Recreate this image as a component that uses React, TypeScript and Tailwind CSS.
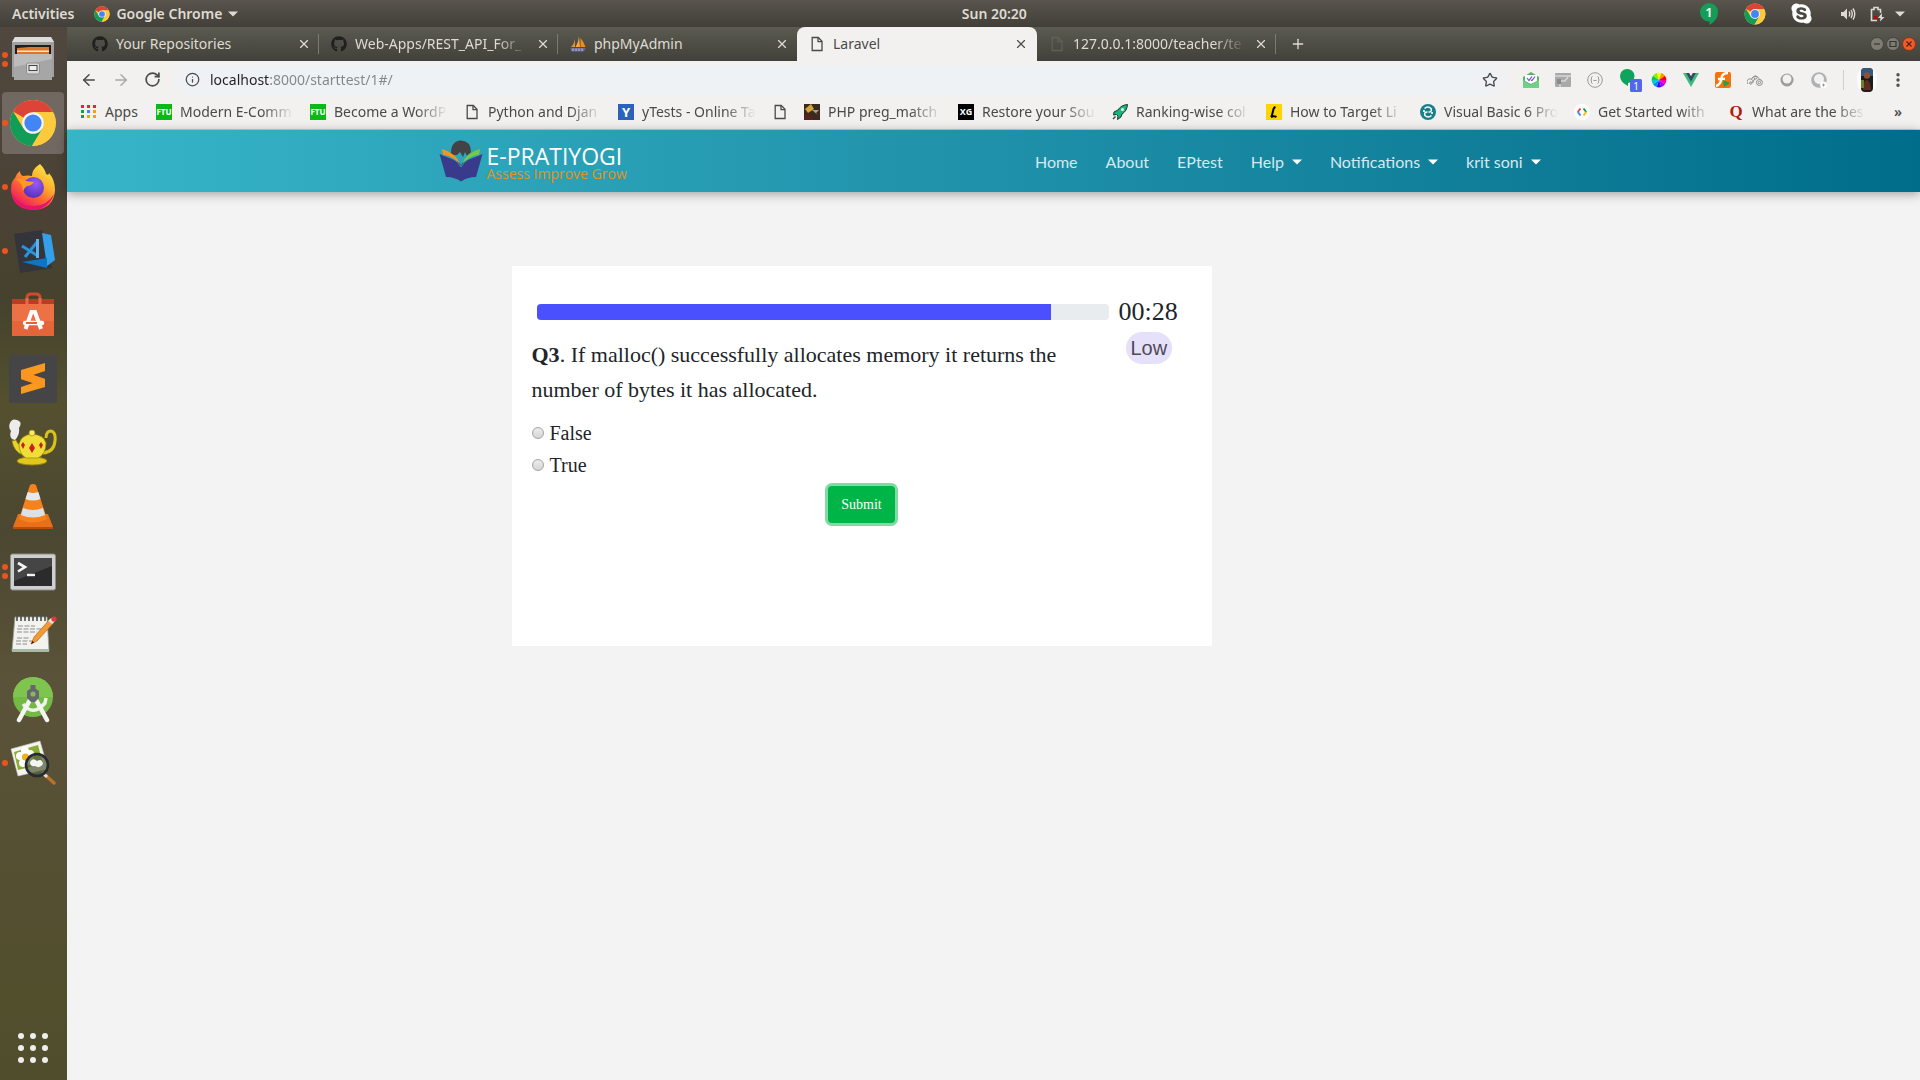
import type { ReactNode } from "react";
import { FaGithub, FaSkype } from "react-icons/fa";
import { ArrowLeft, ArrowRight, EllipsisVertical, Info, Plus, RotateCw, Star, X } from "lucide-react";

/* ---------- Shared icons ---------- */

function ChromeIcon({ className }: { className: string }) {
  return (
    <svg viewBox="0 0 48 48" className={className} aria-hidden="true">
      <circle cx="24" cy="24" r="23" fill="#fdca3d" />
      <path d="M24 24 L4 12.5 A23 23 0 0 1 44 13 L24 13 Z" fill="#dc4437" />
      <path d="M24 24 L33.5 29.5 L23 47 A23 23 0 0 1 4.1 12.5 L14.5 29.5 Z" fill="#119d58" />
      <path d="M33.5 29.5 L23 47 A23 23 0 0 0 44 13.5 L24 13.5 Z" fill="#fdca3d" />
      <circle cx="24" cy="24" r="10.8" fill="#f3f3f3" />
      <circle cx="24" cy="24" r="8.6" fill="#4285f4" />
    </svg>
  );
}

function PageIcon({ color = "#4a4a4a" }: { color?: string }) {
  return (
    <svg viewBox="0 0 16 16" className="size-4 shrink-0" fill="none" stroke={color} strokeWidth="1.3" aria-hidden="true">
      <path d="M3.2 1.5 H9.3 L13 5.3 V14.5 H3.2 Z" />
      <path d="M9 1.5 V5.6 H13" />
    </svg>
  );
}

function PmaIcon() {
  return (
    <svg viewBox="0 0 16 16" className="size-4 shrink-0" aria-hidden="true">
      <path d="M5 2 Q5 7 1 11 H5 Z" fill="#e8912d" />
      <path d="M9 0.5 Q8.5 6 5.6 11 H10 Z" fill="#f9a63a" />
      <path d="M10.5 2 Q14 6 15.5 11 H10.5 Z" fill="#f08c1b" />
      <path d="M0.5 12 H15.5 L14 15.5 H1.5 Z" fill="#6c6a9b" />
      <path d="M3 12.5 V15 M6 12.5 V15 M9 12.5 V15 M12 12.5 V15" stroke="#d5d4e8" strokeWidth="0.8" />
    </svg>
  );
}

/* ---------- Dock ---------- */

const dockSvg = "size-12";

function FilesIcon() {
  return (
    <svg viewBox="0 0 48 48" className={dockSvg}>
      <path d="M6 2 H42 L45 7 V42 H3 V7 Z" fill="#a0a0a0" />
      <path d="M6 2 H42 L45 7 H3 Z" fill="#dcdcdc" />
      <rect x="6" y="10" width="36" height="12" fill="#241c18" />
      <path d="M8 13 L20 12 H40 V20 H8 Z" fill="#e2742a" />
      <path d="M8 15.500 H40 V17 H8 Z" fill="#fde6c8" />
      <rect x="5" y="19" width="38" height="26" rx="1" fill="#bcbcbc" />
      <path d="M5 32 L43 24 V45 H5 Z" fill="#a6a6a6" />
      <rect x="17.500" y="28" width="13" height="11" rx="2" fill="#d8d8d8" stroke="#8f8f8f" />
      <rect x="20" y="30.500" width="8" height="5" fill="#eeeeee" stroke="#444" />
    </svg>
  );
}

function FirefoxIcon() {
  return (
    <svg viewBox="0 0 48 48" className={dockSvg}>
      <defs>
        <linearGradient id="ffBody" x1="1" y1="0" x2="0.3" y2="1">
          <stop offset="0" stopColor="#fff44f" />
          <stop offset="0.4" stopColor="#ffb52e" />
          <stop offset="0.65" stopColor="#ff6a2f" />
          <stop offset="1" stopColor="#ee1167" />
        </linearGradient>
        <radialGradient id="ffGlobe" cx="0.6" cy="0.3" r="0.8">
          <stop offset="0" stopColor="#9a5bf5" />
          <stop offset="1" stopColor="#4d2bb5" />
        </radialGradient>
      </defs>
      <path
        d="M31 1 Q36 6 37 11 Q40 13 40 10 Q46 17 46 27 Q45 46 24 47 Q3 46 2 27 Q2 18 6 15 Q7 11 11 8 Q11 12 14 13 Q19 12 23 13 Q23 6 31 1 Z"
        fill="url(#ffBody)"
      />
      <circle cx="24.500" cy="24.500" r="10.500" fill="url(#ffGlobe)" />
      <path d="M7 16 Q13 15 17 18 Q22 19 25 19 Q22 23 18 23 Q16 24 14 28 Q14 21 7 16 Z" fill="#ff9a28" />
      <path d="M3 30 Q8 46 24 47 Q40 46 45 31 Q38 43 25 43 Q10 43 3 30 Z" fill="#e5156f" />
    </svg>
  );
}

function VsCodeIcon() {
  return (
    <svg viewBox="0 0 48 48" className={dockSvg}>
      <path d="M5 7 L33 3 L43 41 L11 46 Z" fill="#34353a" />
      <path d="M33 6 L42 8 L46 33 L38 39 Z" fill="#35a0ea" />
      <path d="M13 35 L38 31 L38 41 Z" fill="#0b76c4" />
      <path d="M13 19 L29 29 M29 14 L16 30" stroke="#2b93dc" strokeWidth="3" />
      <path d="M28.500 12 V31" stroke="#5ab3ef" strokeWidth="3" />
    </svg>
  );
}

function SoftwareIcon() {
  return (
    <svg viewBox="0 0 48 48" className={dockSvg}>
      <path d="M18 13 V7 Q18 3 22 3 H27 Q31 3 31 7 V13" fill="none" stroke="#d4492d" strokeWidth="3" />
      <path d="M3 8 H45 V14 H3 Z" fill="#b93d22" />
      <path d="M3 13 H45 V45 H3 Z" fill="#ec7145" />
      <path d="M3 30 H45 V45 H3 Z" fill="#e5653b" />
      <path d="M18 13 V7 M31 13 V7" stroke="#e86a48" strokeWidth="3" />
      <path d="M16.500 38 L22.500 21 H26 L32 38" fill="none" stroke="#fff" strokeWidth="4" />
      <path d="M16 32 H33" stroke="#fff" strokeWidth="4.500" strokeLinecap="round" />
      <path d="M17 32 H28" stroke="#e5653b" strokeWidth="2" />
    </svg>
  );
}

function SublimeIcon() {
  return (
    <svg viewBox="0 0 48 48" className={dockSvg}>
      <rect width="48" height="48" rx="3" fill="#454548" />
      <path d="M12 15 L36 8 V16 L24 20 L36 24 V32 L12 39 V32 L24 28 L12 24 Z" fill="#f99a1f" />
      <path d="M12 15 V24 L24 28 L36 32 V24 L24 20 Z" fill="#fb9420" />
    </svg>
  );
}

function TeapotIcon() {
  return (
    <svg viewBox="0 0 48 48" className={dockSvg}>
      <ellipse cx="23" cy="42" rx="15" ry="4" fill="#e2c81d" stroke="#9c8608" />
      <path d="M37 19 Q37 12 42 12 Q47 13 46 22 Q45 33 34 34" fill="none" stroke="#d9c21a" strokeWidth="3" />
      <path d="M3 22 L7 21 Q9 27 15 27 L14 36 Q5 33 3 22 Z" fill="#e8d32b" stroke="#9c8608" strokeWidth="0.7" />
      <path d="M10 25 Q12 16 23 15 Q35 16 37 24 Q37 35 29 39 H17 Q10 35 10 25 Z" fill="#f0de38" stroke="#9c8608" strokeWidth="0.7" />
      <circle cx="23" cy="14" r="3" fill="#f6e965" stroke="#9c8608" strokeWidth="0.7" />
      <path d="M14 23 L16 26 L14 30 L12 26 Z M23 24 L26 29 L23 34 L20 29 Z M32 23 L34 26 L32 30 L30 26 Z" fill="#cc1e1e" />
      <path d="M3 20 Q0 17 2 12 Q-1 8 1 4 Q3 -1 8 1 Q14 3 10 9 Q11 16 6 21 Z" fill="#ececec" />
    </svg>
  );
}

function VlcIcon() {
  return (
    <svg viewBox="0 0 48 48" className={dockSvg}>
      <path d="M9 31 H39 L44 44 V46 H4 V44 Z" fill="#e9701a" />
      <path d="M4 44 H44 V46 H4 Z" fill="#b94e0a" />
      <path d="M21 2 Q24 0 27 2 L38 36 Q24 43 10 36 Z" fill="#f4831f" />
      <path d="M18.700 9 Q24 11 29.300 9 L31.500 16 Q24 19 16.500 16 Z" fill="#e6e9ec" />
      <path d="M14 25 Q24 29 34 25 L36 32 Q24 37 12 32 Z" fill="#dde1e5" />
    </svg>
  );
}

function TerminalIcon() {
  return (
    <svg viewBox="0 0 48 48" className={dockSvg}>
      <rect x="1.500" y="7" width="45" height="36" rx="2" fill="#cfcfcf" stroke="#8e8e8e" />
      <rect x="5" y="11" width="38" height="28" fill="#2b2b2b" />
      <path d="M5 11 H43 V19 L5 34 Z" fill="#454545" />
      <path d="M9 16 L16 20 L9 24.500" fill="none" stroke="#f4f4f4" strokeWidth="2.600" />
      <path d="M18 28 H26" stroke="#f4f4f4" strokeWidth="2.400" />
    </svg>
  );
}

function NotepadIcon() {
  return (
    <svg viewBox="0 0 48 48" className={dockSvg}>
      <path d="M6 6 H38 L40 40 H3 Z" fill="#f2f2ee" stroke="#9aa39a" strokeWidth="0.8" />
      <path d="M3 38 H40 V41 H3 Z" fill="#a8bba8" />
      <path d="M8 4 V10 M12 4 V10 M16 4 V10 M20 4 V10 M24 4 V10 M28 4 V10 M32 4 V10 M36 4 V10" stroke="#4b4b4b" strokeWidth="1.600" />
      <path d="M9 15 H26 M8 18 H33 M8 21 H28 M8 27 H20 M7 30 H24 M7 33 H18" stroke="#8f8f8f" strokeWidth="1" strokeDasharray="5 1.500" />
      <path d="M22 33 L25 26 L41 8 L45 11.500 L28 30 Z" fill="#f29a35" stroke="#b96a14" strokeWidth="0.7" />
      <path d="M39 10 L42 7 L46 10 L43 13 Z" fill="#dfe3e6" />
      <circle cx="45" cy="8" r="2.600" fill="#e03a3a" />
      <path d="M22 33 L23.500 30 L25 31.500 Z" fill="#111" />
    </svg>
  );
}

function StudioIcon() {
  return (
    <svg viewBox="0 0 48 48" className={dockSvg}>
      <circle cx="24" cy="22" r="20" fill="#74b944" />
      <path d="M4 22 A20 20 0 0 1 44 22 Z" fill="#7fc44f" />
      <path d="M14 29 Q24 42 36 28 L37 23" fill="none" stroke="#eef3ea" strokeWidth="3.500" />
      <path d="M22 23 L10 45 M26 23 L38 45" stroke="#f3f5f2" strokeWidth="4.500" strokeLinecap="round" />
      <path d="M21.500 10 H26.500 V15 H21.500 Z" fill="#63686c" />
      <path d="M18 16 L24 12 L30 16 V23 L26 27 H22 L18 23 Z" fill="#63686c" />
      <circle cx="24" cy="19" r="2.600" fill="#8bb55f" />
    </svg>
  );
}

function ViewerIcon() {
  return (
    <svg viewBox="0 0 48 48" className={dockSvg}>
      <path d="M2 10 L31 2 L39 30 L9 37 Z" fill="#f4f4f0" stroke="#c8c8c0" strokeWidth="0.6" />
      <path d="M5 13 L29 6 L34 25 L9 31 Z" fill="#8cac35" />
      <g fill="#fff">
        <circle cx="16" cy="12" r="4" />
        <circle cx="21" cy="15" r="4" />
        <circle cx="21" cy="22" r="4" />
        <circle cx="14" cy="24" r="4" />
        <circle cx="11" cy="17" r="4" />
      </g>
      <circle cx="16.500" cy="18" r="3.600" fill="#f3b01c" />
      <path d="M34 34 L45 44" stroke="#b9722c" strokeWidth="3.500" strokeLinecap="round" />
      <path d="M33 33 L38 38" stroke="#ddd" strokeWidth="3" />
      <circle cx="28" cy="26" r="11" fill="#55603f" fillOpacity="0.75" stroke="#262b30" strokeWidth="2.600" />
      <path d="M21 23 Q24 18 28 22 Q33 19 34 25 Q31 30 26 27 Q21 28 21 23 Z" fill="#f5f5f0" />
    </svg>
  );
}

const dockApps: { name: string; icon: ReactNode; windows: number; active?: boolean }[] = [
  { name: "Files", icon: <FilesIcon />, windows: 2 },
  { name: "Google Chrome", icon: <ChromeIcon className={dockSvg} />, windows: 1, active: true },
  { name: "Firefox", icon: <FirefoxIcon />, windows: 1 },
  { name: "Visual Studio Code", icon: <VsCodeIcon />, windows: 1 },
  { name: "Ubuntu Software", icon: <SoftwareIcon />, windows: 0 },
  { name: "Sublime Text", icon: <SublimeIcon />, windows: 0 },
  { name: "Teapot", icon: <TeapotIcon />, windows: 0 },
  { name: "VLC", icon: <VlcIcon />, windows: 0 },
  { name: "Terminal", icon: <TerminalIcon />, windows: 2 },
  { name: "Text Editor", icon: <NotepadIcon />, windows: 0 },
  { name: "Android Studio", icon: <StudioIcon />, windows: 0 },
  { name: "Image Viewer", icon: <ViewerIcon />, windows: 1 },
];

function Dock() {
  return (
    <nav
      aria-label="Dock"
      className="flex w-[67px] shrink-0 flex-col bg-[linear-gradient(180deg,#50473f_0%,#4b4235_18%,#45422d_26%,#54502f_36%,#4b4731_48%,#5b5339_62%,#565035_75%,#514f2c_92%,#4f4d2c_100%)]"
    >
      {dockApps.map((app) => (
        <button key={app.name} aria-label={app.name} className="flex h-16 items-center">
          <span className={app.active ? "ml-0.5 flex h-[62px] w-[62px] items-center rounded bg-[#716961]" : "ml-0.5 flex h-[62px] w-[62px] items-center rounded"}>
            <span className="flex w-[7px] flex-col gap-[3px]">
              {Array.from({ length: app.windows }, (_, i) => (
                <i key={i} className="size-[6px] rounded-full bg-[#e95420]" />
              ))}
            </span>
            {app.icon}
          </span>
        </button>
      ))}
      <button aria-label="Show applications" className="mt-auto mb-[17px] ml-[18px] grid grid-cols-3 gap-[6px] self-start">
        {Array.from({ length: 9 }, (_, i) => (
          <i key={i} className="size-[6px] rounded-full bg-[#eeeeec]" />
        ))}
      </button>
    </nav>
  );
}

/* ---------- Desktop top bar ---------- */

function Caret({ className }: { className: string }) {
  return (
    <svg viewBox="0 0 10 6" className={className} aria-hidden="true">
      <path d="M0 0.500 H10 L5 5.500 Z" fill="currentColor" />
    </svg>
  );
}

function TopBar() {
  return (
    <header className="grid h-[27px] shrink-0 grid-cols-[14fr_auto_13fr] items-center bg-linear-to-b from-[#59554d] to-[#423f39] text-sm font-semibold text-[#dfdbd2]">
      <div className="flex items-center pl-3">
        <button>Activities</button>
        <button className="ml-5 flex items-center">
          <ChromeIcon className="mr-[6px] size-4" />
          Google Chrome
          <Caret className="ml-[6px] h-[6px] w-[10px]" />
        </button>
      </div>
      <time>Sun 20:20</time>
      <div className="flex items-center justify-end pr-[15px]">
        <svg viewBox="0 0 22 22" className="mr-6 size-[22px]" aria-label="1 notification">
          <path d="M11 0 A9 9 0 0 1 20 9.500 Q20 17 11.500 22 V18.500 A9 9 0 0 1 11 0 Z" fill="#149d58" />
          <text x="11" y="14" textAnchor="middle" fontSize="13" fill="#fff">1</text>
        </svg>
        <ChromeIcon className="mr-6 size-[22px]" />
        <FaSkype className="mr-[27px] size-[23px] text-white" />
        <svg viewBox="0 0 16 16" className="mr-[13px] size-4" fill="none" stroke="currentColor" strokeWidth="1.400">
          <path d="M1 6 H3.500 L7 2.500 V13.500 L3.500 10 H1 Z" fill="currentColor" stroke="none" />
          <path d="M9 5.500 Q10.500 8 9 10.500 M11 4 Q13.500 8 11 12 M13 2.500 Q16.500 8 13 13.500" />
        </svg>
        <svg viewBox="0 0 16 16" className="mr-[10px] size-4" fill="none" stroke="currentColor" strokeWidth="1.600">
          <path d="M8 14.500 H2.500 V3.500 H5 V1.500 H9 V3.500 H11.500 V7" />
          <rect x="5" y="10" width="3" height="3" fill="#c00" stroke="none" />
          <path d="M13 7 L9 12 H11.500 L11 15.500 L15.500 11 H12.800 Z" fill="currentColor" stroke="none" />
        </svg>
        <Caret className="h-[6px] w-[10px]" />
      </div>
    </header>
  );
}

/* ---------- Browser chrome ---------- */

const fade = "overflow-hidden whitespace-nowrap [mask-image:linear-gradient(90deg,#000_calc(100%-32px),transparent)]";
const plain = "overflow-hidden whitespace-nowrap";

const tabs = [
  { title: "Your Repositories", icon: <FaGithub className="size-4 shrink-0 text-[#1f2020]" /> },
  { title: "Web-Apps/REST_API_For_", icon: <FaGithub className="size-4 shrink-0 text-[#1f2020]" />, faded: true },
  { title: "phpMyAdmin", icon: <PmaIcon /> },
  { title: "Laravel", icon: <PageIcon />, active: true },
  { title: "127.0.0.1:8000/teacher/te", icon: <PageIcon color="#60605a" />, faded: true },
];

function TabStrip() {
  return (
    <div className="flex h-[34px] bg-linear-to-b from-[#5c5b51] to-[#41403a] pl-[13px] text-[#dfdbd2]">
      {tabs.map((tab, i) => (
        <div
          key={tab.title}
          className={
            tab.active
              ? "flex w-[240px] items-center rounded-t-lg bg-[#f2f1f0] pr-[9px] pl-3 text-[#4a4a4a]"
              : "flex w-[239px] items-center pl-3"
          }
        >
          {tab.icon}
          <span className={tab.faded ? `ml-2 flex-1 text-sm ${fade}` : `ml-2 flex-1 text-sm ${plain}`}>{tab.title}</span>
          <button aria-label={`Close ${tab.title}`} className="ml-2">
            <X className="size-[14px]" />
          </button>
          {!tab.active && <i className={i === 2 ? "ml-[7px] h-5 w-px" : "ml-[7px] h-5 w-px bg-[#7b7a72]"} />}
        </div>
      ))}
      <button aria-label="New tab" className="ml-[14px]">
        <Plus className="size-4" />
      </button>
      <div className="ml-auto flex items-center gap-[2px] pr-1">
        {["M4 7 H10", "M4 4.500 H10 V9.500 H4 Z"].map((d) => (
          <svg key={d} viewBox="0 0 14 14" className="size-[14px]">
            <circle cx="7" cy="7" r="6.500" fill="#7e7c73" stroke="#44433d" />
            <path d={d} fill="none" stroke="#35342f" strokeWidth="1.200" />
          </svg>
        ))}
        <svg viewBox="0 0 14 14" className="size-[14px]">
          <circle cx="7" cy="7" r="6.500" fill="#ef5b2b" stroke="#8e3313" />
          <path d="M4.500 4.500 L9.500 9.500 M9.500 4.500 L4.500 9.500" stroke="#55230f" strokeWidth="1.300" />
        </svg>
      </div>
    </div>
  );
}

const wheel = ["#ff0", "#f90", "#f00", "#f0a", "#a0f", "#40f", "#08f", "#0cc", "#0c4", "#8e0"];

function Extensions() {
  return (
    <div className="flex items-center gap-4">
      <svg viewBox="0 0 16 16" className="size-4">
        <path d="M0 5 L8 0 L16 5 V16 H0 Z" fill="#58b368" />
        <path d="M2 3 H14 V9 L8 12 L2 9 Z" fill="#fff" />
        <path d="M4 6 L6 8.500 L9 4.500 M8 8 L9 8.500 L12 4.500" fill="none" stroke="#6a4bd0" strokeWidth="1.200" />
        <path d="M0 8 L8 13 L16 8 V16 H0 Z" fill="#6fd184" />
      </svg>
      <svg viewBox="0 0 16 16" className="size-4">
        <rect y="1" width="16" height="14" rx="1" fill="#a9a9a9" />
        <path d="M0 4 H16 M5 15 V9 H10 L13 5" stroke="#d6d6d6" strokeWidth="1.500" fill="none" />
        <rect x="2" y="7" width="4" height="5" fill="#8a8a8a" />
      </svg>
      <svg viewBox="0 0 16 16" className="size-4" fill="none" stroke="#999">
        <circle cx="8" cy="8" r="7.300" />
        <path d="M5.500 4.500 Q4 4.500 4.500 7 L3.800 8 L4.500 9 Q4 11.500 5.500 11.500 M10.500 4.500 Q12 4.500 11.500 7 L12.200 8 L11.500 9 Q12 11.500 10.500 11.500 M6.500 8.500 H9.500" />
      </svg>
      <svg viewBox="0 0 24 24" className="-mr-2 size-6">
        <path d="M8 1 A7 7 0 1 1 9 15 V18 Q1 14 1 8 A7 7 0 0 1 8 1 Z" fill="#0fa45c" />
        <rect x="11" y="11" width="12" height="13" rx="1.500" fill="#5267f0" />
        <text x="17" y="21.500" textAnchor="middle" fontSize="10" fill="#fff">1</text>
      </svg>
      <svg viewBox="0 0 16 16" className="size-4">
        {wheel.map((color, i) => (
          <path key={color} d="M8 8 L5.700 1 A7.300 7.300 0 0 1 10.300 1 Z" fill={color} transform={`rotate(${i * 36} 8 8)`} />
        ))}
      </svg>
      <svg viewBox="0 0 16 16" className="size-4">
        <path d="M0 1 H16 L8 15 Z" fill="#41b883" />
        <path d="M3.200 1 H12.800 L8 9.500 Z" fill="#35495e" />
        <path d="M6.200 1 H9.800 L8 4.200 Z" fill="#f2f1f0" />
      </svg>
      <svg viewBox="0 0 16 16" className="size-4">
        <rect width="16" height="16" rx="2" fill="#f5730a" />
        <path d="M13 1 Q7 1 6.500 6 Q5.500 13 1 14 M3 7 H10" fill="none" stroke="#fff" strokeWidth="2.400" />
        <path d="M8 8 L15 11 L9 15 Z" fill="#1fa04a" />
      </svg>
      <svg viewBox="0 0 16 16" className="size-4" fill="none" stroke="#8d8d8d">
        <path d="M1 12 A3 3 0 1 1 6 10 M4.500 7.500 A4 4 0 0 1 12 6.500 L14 8.500 M5.500 11 L8 6" />
        <circle cx="3.800" cy="11" r="1.200" />
        <circle cx="8.500" cy="5.500" r="1.600" />
        <circle cx="12.400" cy="10.500" r="3" />
        <circle cx="12.400" cy="10.500" r="1.200" />
      </svg>
      <svg viewBox="0 0 16 16" className="size-4">
        <circle cx="8" cy="8" r="6.500" fill="#9c9c9c" />
        <circle cx="8" cy="7" r="4.500" fill="#f1f1f1" />
      </svg>
      <svg viewBox="0 0 16 16" className="size-4">
        <circle cx="8" cy="8" r="7.800" fill="#b1b1b1" />
        <circle cx="8" cy="7" r="5" fill="#f1f1f1" />
        <circle cx="12.500" cy="13" r="3.400" fill="#fff" />
        <path d="M11 13 H14 M12.500 11.500 V14.500" stroke="#999" />
      </svg>
    </div>
  );
}

function Toolbar() {
  return (
    <div className="flex h-[37px] items-center bg-[#f2f1f0] pr-[13px] pl-[13px] text-[#4a4a4a]">
      <button aria-label="Back"><ArrowLeft className="size-[18px]" /></button>
      <button aria-label="Forward" className="ml-[14px] text-[#a9a8a7]"><ArrowRight className="size-[18px]" /></button>
      <button aria-label="Reload" className="ml-[14px]"><RotateCw className="size-[17px]" strokeWidth={2.4} /></button>
      <div className="ml-3 flex h-7 flex-1 items-center rounded-full bg-[#eef2f4] pr-[9px] pl-3">
        <Info className="size-[15px] shrink-0" />
        <input
          aria-label="Address"
          defaultValue="localhost:8000/starttest/1#/"
          className="ml-[10px] flex-1 bg-[linear-gradient(90deg,#202124_60px,#80868b_60px)] bg-clip-text text-sm text-transparent outline-none"
        />
        <button aria-label="Bookmark this page"><Star className="size-4" /></button>
      </div>
      <div className="ml-4 flex items-center">
        <Extensions />
        <i className="ml-4 h-5 w-px bg-[#cfcecd]" />
        <svg viewBox="0 0 20 24" className="ml-[13px] h-6 w-5" aria-label="Profile">
          <rect width="20" height="24" rx="9" fill="#fafafa" />
          <rect x="4" width="12" height="24" rx="4" fill="#1d1c1a" />
          <path d="M4 4 Q4 0 8 0 H12 Q16 0 16 4 V8 H4 Z" fill="#35597a" />
          <circle cx="10" cy="7.500" r="3.200" fill="#8a5236" />
          <path d="M6 22 Q6 12 10 12 Q13 12 14 22 Z" fill="#5c2c20" />
          <path d="M4 12 H7 V20 H4 Z" fill="#6f7f2d" />
        </svg>
        <button aria-label="Menu" className="ml-3"><EllipsisVertical className="size-[18px]" strokeWidth={2.5} /></button>
      </div>
    </div>
  );
}

function TileIcon({ className, children }: { className: string; children: ReactNode }) {
  return <span className={`flex size-4 shrink-0 items-center justify-center font-bold leading-4 ${className}`}>{children}</span>;
}

const appColors = ["#e8203c", "#e8203c", "#e8203c", "#0d9d58", "#4285f4", "#f4a20a", "#0d9d58", "#f4a20a", "#f4a20a"];

const bookmarks: { title: string; icon: ReactNode }[] = [
  { title: "Modern E-Comm", icon: <TileIcon className="bg-[#0bb818] text-[8px] text-white">FTU</TileIcon> },
  { title: "Become a WordP", icon: <TileIcon className="bg-[#0bb818] text-[8px] text-white">FTU</TileIcon> },
  { title: "Python and Djan", icon: <PageIcon /> },
  { title: "yTests - Online Ta", icon: <TileIcon className="bg-[#2b62bd] text-[13px] text-white">Y</TileIcon> },
  { title: "", icon: <PageIcon /> },
  {
    title: "PHP preg_match",
    icon: (
      <svg viewBox="0 0 16 16" className="size-4 shrink-0">
        <rect width="16" height="16" fill="#3a2a1c" />
        <path d="M1 5 L7 0 L10 5 L4 9 Z" fill="#d4a13a" />
        <path d="M8 6 L15 12 L12 9 L15 6 Z" fill="#a99d8c" />
        <path d="M1 12 L5 9 L9 16 H1 Z" fill="#5b2020" />
      </svg>
    ),
  },
  { title: "Restore your Sou", icon: <TileIcon className="bg-black text-[9px] text-white">XG</TileIcon> },
  {
    title: "Ranking-wise col",
    icon: (
      <svg viewBox="0 0 16 16" className="size-4 shrink-0">
        <path d="M15.500 0.500 Q9 1 6 6 L2 8 L1.500 11 L4.500 10.500 L6 12 L5.500 15.500 L9 13 L10 10 Q15 7 15.500 0.500 Z" fill="#13b87b" stroke="#22332c" />
        <circle cx="10.500" cy="5.500" r="1.500" fill="#e8f5ef" />
        <path d="M1 15 L3.500 12.500" stroke="#444" strokeWidth="1.500" />
      </svg>
    ),
  },
  {
    title: "How to Target Li",
    icon: (
      <svg viewBox="0 0 16 16" className="size-4 shrink-0">
        <rect width="16" height="16" fill="#ffd500" />
        <path d="M9.500 3 Q7.500 3.500 7 7 Q6 12 5 13 Q8 11.500 10.500 13" fill="none" stroke="#000" strokeWidth="2" />
      </svg>
    ),
  },
  {
    title: "Visual Basic 6 Pro",
    icon: (
      <svg viewBox="0 0 16 16" className="size-4 shrink-0">
        <circle cx="8" cy="8" r="8" fill="#178089" />
        <path d="M4.500 4.500 Q8 1.500 11 4.500 Q12.500 8 8.500 8 M11.500 11.500 Q8 14.500 5 11.500 Q3.500 8 7.500 8" fill="none" stroke="#fff" strokeWidth="1.500" />
        <circle cx="4" cy="7" r="1.100" fill="#fff" />
        <circle cx="12" cy="9" r="1.100" fill="#fff" />
      </svg>
    ),
  },
  {
    title: "Get Started with",
    icon: (
      <svg viewBox="0 0 16 16" className="size-4 shrink-0" fill="none" strokeWidth="2">
        <circle cx="8" cy="8" r="8" fill="#fff" />
        <path d="M6.500 4.500 L3.800 8" stroke="#ea4335" />
        <path d="M3.800 8 L6.500 11.500" stroke="#4285f4" />
        <path d="M9.500 4.500 L12.200 8" stroke="#0f9d58" />
        <path d="M12.200 8 L9.500 11.500" stroke="#fbbc05" />
      </svg>
    ),
  },
  { title: "What are the bes", icon: <TileIcon className="font-['Liberation_Serif',serif] text-[17px] text-[#b31b0c]">Q</TileIcon> },
];

function BookmarksBar() {
  return (
    <div className="flex h-8 items-center gap-4 border-b border-[#cfcdcb] bg-[#f2f1f0] pb-1 pl-[14px] text-sm text-[#4a4a4a]">
      <a href="#apps" className="flex w-[59px] items-center gap-2">
        <span className="grid size-4 grid-cols-3 place-content-center gap-[2px]">
          {appColors.map((color, i) => (
            <i key={i} className="size-[3px]" style={{ backgroundColor: color }} />
          ))}
        </span>
        Apps
      </a>
      {bookmarks.map((b, i) => (
        <a key={i} href="#bookmark" aria-label={b.title || "Untitled page"} className="flex items-center gap-2">
          {b.icon}
          {b.title && <span className={`w-[114px] ${fade}`}>{b.title}</span>}
        </a>
      ))}
      <button aria-label="More bookmarks" className="mr-[18px] ml-auto font-semibold">»</button>
    </div>
  );
}

/* ---------- Site ---------- */

const navLinks = [
  { label: "Home" },
  { label: "About" },
  { label: "EPtest" },
  { label: "Help", menu: true },
  { label: "Notifications", menu: true },
  { label: "krit soni", menu: true },
];

function SiteNav() {
  return (
    <nav className="relative bg-linear-to-r from-[#37b5c8] to-[#006e8b] shadow-[0_2px_10px_rgba(0,0,0,0.35)]">
      <div className="mx-auto flex h-[62px] w-full max-w-[1140px] items-center justify-between px-[15px]">
        <a href="#home" className="flex items-center gap-1">
          <svg viewBox="0 0 44 42" className="h-[42px] w-11" aria-hidden="true">
            <path d="M12 13 Q12 1 22 0.500 Q32 1 32 12 L28 16 L26 12 L24 17 L21 12 L18 15 L13 15 Z" fill="#434345" />
            <path d="M0.500 14 L20 22 Q22 24 22 27 Q22 24 24 22 L43.500 14 L37 37 Q28 37 22 41.500 Q16 37 7 37 Z" fill="#3a3a8c" />
            <path d="M3 9 Q17 13 21 24 Q15 17 4 15 Z" fill="#f7941e" />
            <path d="M41 9 Q27 13 23 24 Q29 17 40 15 Z" fill="#7ac943" />
            <path d="M4 15 Q16 17 22 27 Q28 17 40 15" fill="none" stroke="#2ba5ba" strokeWidth="0.800" />
          </svg>
          <span className="flex flex-col pt-[2px] font-['Open_Sans',sans-serif]">
            <span className="text-[23px] leading-6 text-white">E-PRATIYOGI</span>
            <span className="text-sm leading-3 text-[#e0941c]">Assess Improve Grow</span>
          </span>
        </a>
        <ul className="flex items-center gap-7 pt-[2px] pr-2 font-['Lato',sans-serif] text-base text-[#d5e9ee]">
          {navLinks.map((link) => (
            <li key={link.label}>
              <a href="#nav" className="flex items-center">
                {link.label}
                {link.menu && <Caret className="ml-2 h-[6px] w-[10px] text-white" />}
              </a>
            </li>
          ))}
        </ul>
      </div>
    </nav>
  );
}

function QuizCard() {
  return (
    <section className="ml-[88px] min-h-[380px] w-[700px] bg-white px-5 pt-[30px] pb-8 font-['Liberation_Serif',serif] text-[#212529]">
      <div className="flex items-center pl-[5px]">
        <div role="progressbar" aria-label="Time left" aria-valuenow={90} className="h-4 w-[572px] overflow-hidden rounded bg-[#e9ecef]">
          <div className="h-full bg-[#4b50ff]" style={{ width: "90%" }} />
        </div>
        <time className="ml-[10px] text-[26px] leading-8">00:28</time>
      </div>
      <div className="flex items-start">
        <h1 className="w-[594px] pt-[9px] pr-6 text-[22px] leading-[35px]">
          <b>Q3</b>. If malloc() successfully allocates memory it returns the number of bytes it has allocated.
        </h1>
        <span className="mt-1 rounded-2xl bg-[#e6e1fa] px-[5px] font-['Liberation_Sans',sans-serif] text-xl leading-8 text-[#4f4a58]">Low</span>
      </div>
      <form onSubmit={(e) => e.preventDefault()}>
        <div className="mt-[10px] text-xl leading-8">
          {["False", "True"].map((answer) => (
            <label key={answer} className="flex items-center gap-[6px]">
              <input
                type="radio"
                name="answer"
                value={answer}
                className="size-3 appearance-none rounded-full border border-[#a3a3a3] bg-linear-to-b from-[#ebebeb] to-[#d6d6d6]"
              />
              {answer}
            </label>
          ))}
        </div>
        <div className="mt-[5px] flex justify-center">
          <button type="submit" className="h-[37px] rounded bg-[#00b548] px-[13px] text-sm text-white ring-3 ring-[#80daa3]">
            Submit
          </button>
        </div>
      </form>
    </section>
  );
}

export default function App() {
  return (
    <div className="flex min-h-screen flex-col font-['Noto_Sans','Open_Sans',sans-serif]">
      <TopBar />
      <div className="flex flex-1">
        <Dock />
        <div className="flex min-w-0 flex-1 flex-col bg-[#f3f3f3]">
          <TabStrip />
          <Toolbar />
          <BookmarksBar />
          <SiteNav />
          <main className="mx-auto w-full max-w-[1140px] pt-[74px]">
            <QuizCard />
          </main>
        </div>
      </div>
    </div>
  );
}
